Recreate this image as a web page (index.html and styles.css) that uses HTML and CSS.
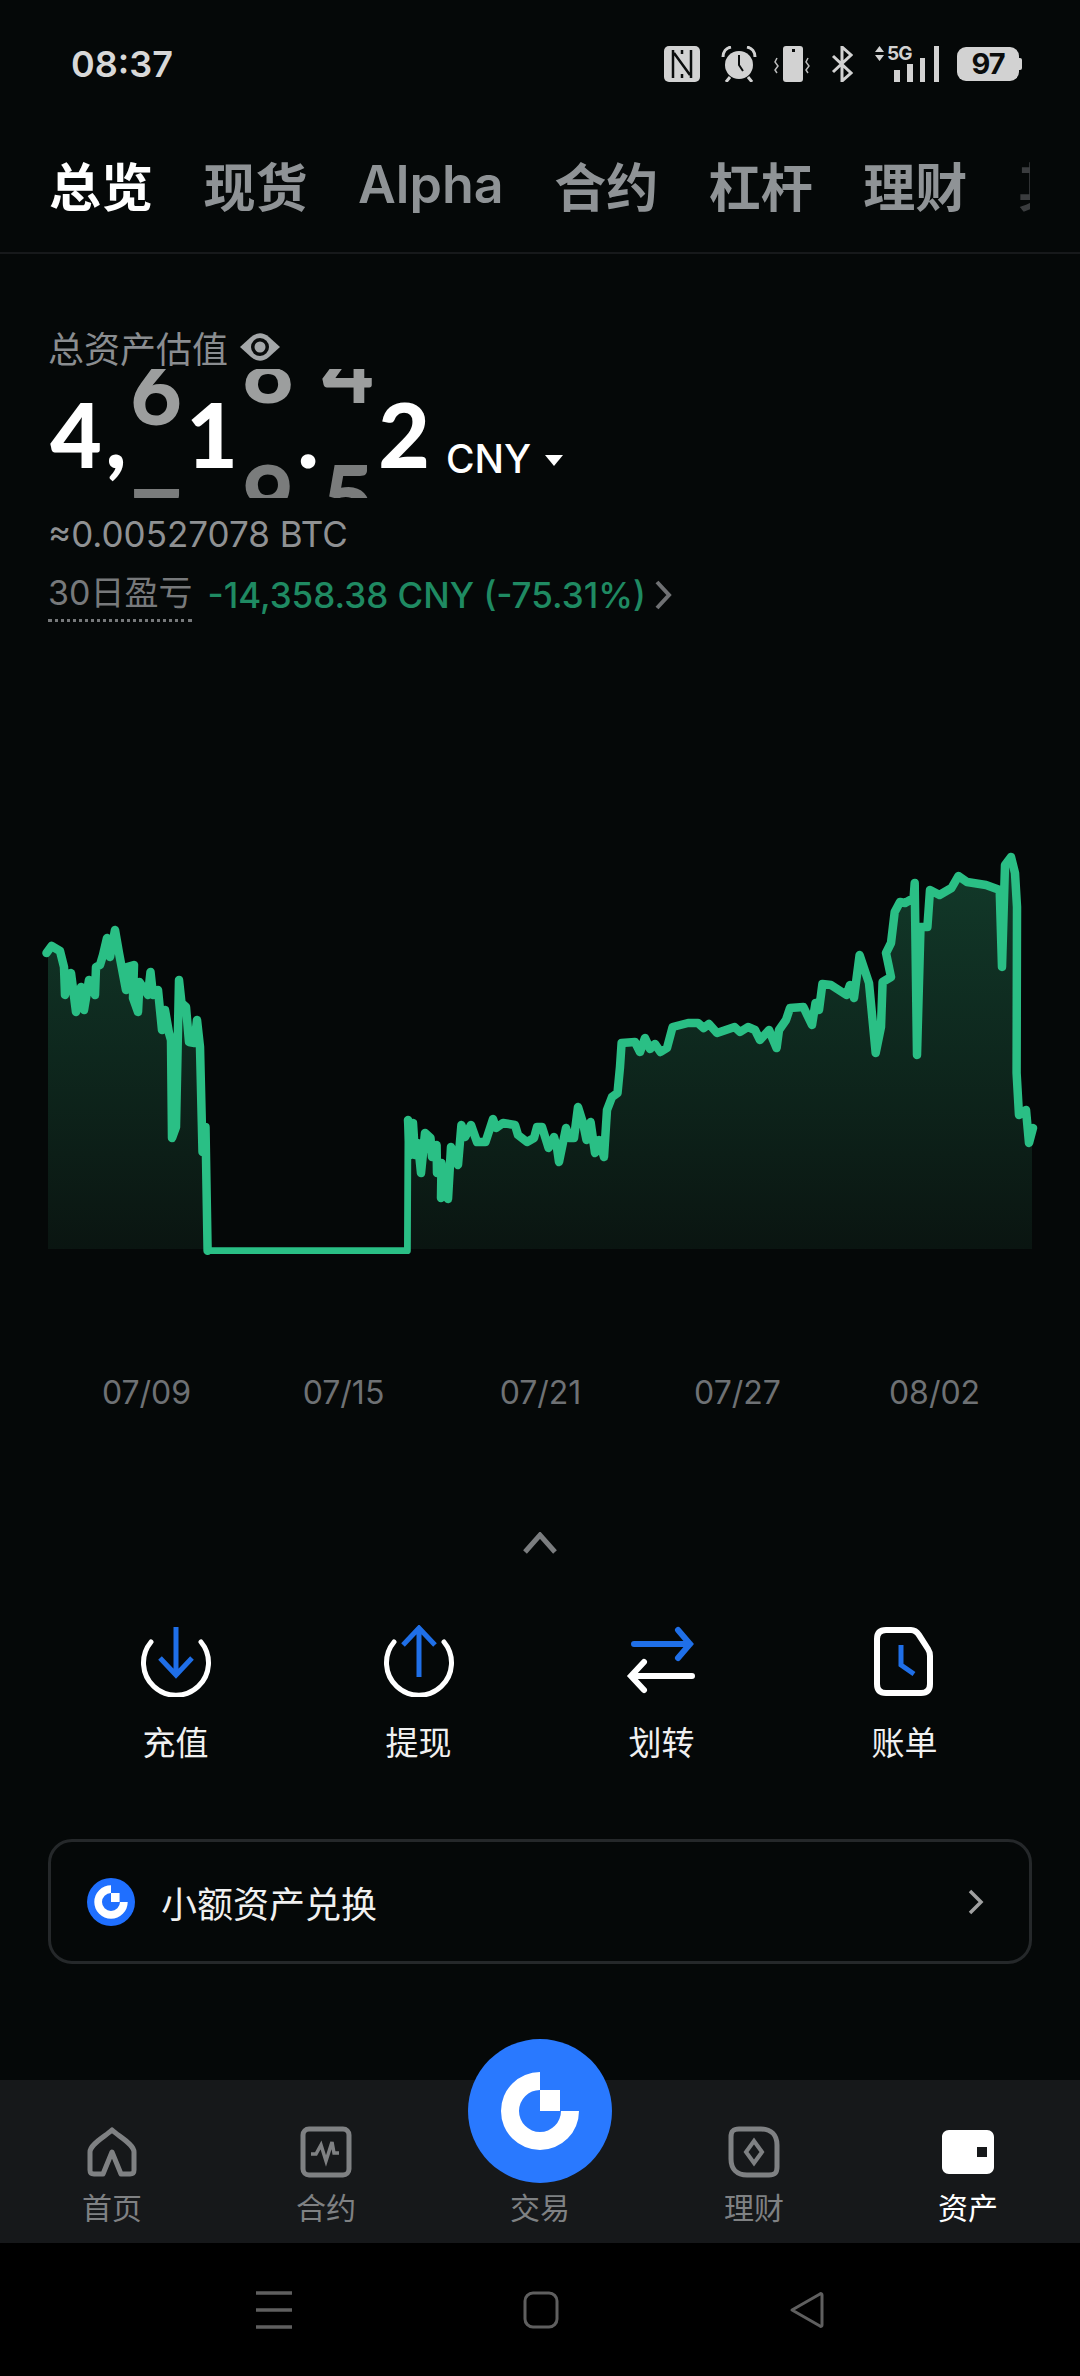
FILE: index.html
```html
<!DOCTYPE html>
<html lang="zh-CN">

    <head>
        <meta charset="UTF-8">
        <meta name="viewport" content="width=device-width, initial-scale=1.0">
        <title>总览</title>
        <link rel="stylesheet" href="styles.css">
    </head>

    <body>
        <div class="status">
            <span class="time">08:37</span>
            <div class="status-icons">
                <svg class="ic-nfc" width="36" height="36" viewBox="0 0 36 36"><rect width="36" height="36" rx="5" fill="#d2d2d2"/><path d="M9 4v28M18 4v4M18 28v4M27 4v28M10 7l16 22" fill="none" stroke="#0a0c0c" stroke-width="2.500"/></svg>
                <svg class="ic-alarm" width="36" height="36" viewBox="0 0 36 36"><circle cx="18" cy="19" r="14" fill="#d2d2d2"/><path d="M18 9v10l4 6" fill="none" stroke="#0a0c0c" stroke-width="2"/><path d="M2 11C2 6 5 2 10 1M34 11c0-5-3-9-8-10M9 31l-4 5M27 31l4 5" fill="none" stroke="#d2d2d2" stroke-width="3"/></svg>
                <svg class="ic-vibrate" width="36" height="36" viewBox="0 0 36 36"><rect x="9" width="20" height="36" rx="3" fill="#d2d2d2"/><rect x="18" y="3" width="3" height="3" fill="#0a0c0c"/><path d="M3 12l-2 4 3 4-3 4 2 3M34 12l-2 4 3 4-3 4 2 3" fill="none" stroke="#bcbcbc" stroke-width="1.500"/></svg>
                <svg class="ic-bt" width="22" height="36" viewBox="0 0 22 36"><path d="M2 10l18 17-9 8V1l9 8L2 26" fill="none" stroke="#d2d2d2" stroke-width="3"/></svg>
                <div class="signal">
                    <svg class="arrows" width="9" height="15" viewBox="0 0 9 15"><path d="M4.500 0 9 6H0zM4.500 15 0 9h9z" fill="#d2d2d2"/></svg>
                    <span class="five-g">5G</span>
                    <svg class="bars" width="46" height="36" viewBox="0 0 46 36"><path d="M0 24h6v12H0zM13 18h6v18h-6zM26 12h5v24h-5zM40 0h5v36h-5z" fill="#d2d2d2"/></svg>
                </div>
                <div class="battery"><span>97</span></div>
            </div>
        </div>

        <nav class="tabs">
            <div class="tab-list">
                <span class="tab active">总览</span>
                <span class="tab">现货</span>
                <span class="tab">Alpha</span>
                <span class="tab">合约</span>
                <span class="tab">杠杆</span>
                <span class="tab">理财</span>
                <span class="tab faded">其他</span>
            </div>
        </nav>

        <section class="summary">
            <div class="label-row">
                <span>总资产估值</span>
                <svg width="40" height="28" viewBox="0 0 40 28"><path d="M0 14 11 4C17-1 23-1 29 4L40 14 29 24C23 29 17 29 11 24z" fill="#a4a7a9"/><circle cx="20" cy="14" r="9" fill="#0a0c0c"/><circle cx="20" cy="14" r="5.500" fill="#a4a7a9"/></svg>
            </div>
            <div class="amount-row">
                <div class="roller">
                    <span class="cell">4</span>
                    <span class="cell punct">,</span>
                    <span class="cell reel reel-a"><b>6</b><i>7</i></span>
                    <span class="cell">1</span>
                    <span class="cell reel reel-b"><b>8</b><i>9</i></span>
                    <span class="cell punct">.</span>
                    <span class="cell reel reel-b"><b>4</b><i>5</i></span>
                    <span class="cell">2</span>
                </div>
                <span class="unit">CNY</span>
                <svg class="caret" width="18" height="11" viewBox="0 0 18 11"><path d="M0 0h18l-9 11z" fill="#fff"/></svg>
            </div>
            <div class="btc">≈0.00527078 BTC</div>
            <div class="pnl">
                <span class="pnl-label">30日盈亏</span>
                <span class="pnl-value">-14,358.38 CNY (-75.31%)</span>
                <svg width="17" height="30" viewBox="0 0 17 30"><path d="M2 2l12 13L2 28" fill="none" stroke="#6f7173" stroke-width="4"/></svg>
            </div>
        </section>

        <svg class="chart" width="1080" height="500" viewBox="0 800 1080 500">
            <defs>
                <linearGradient id="area" x1="0" y1="0" x2="0" y2="1">
                    <stop offset="0" stop-color="#123a2a"/>
                    <stop offset="1" stop-color="#0a1511"/>
                </linearGradient>
            </defs>
            <path fill="url(#area)" d="M48 1249V953L51.600 946 60 951 64 967 65 995 71 973 76 1012 81 987 84 1010 89 980 95 995 96 967 100 965 103 955 107 938 110 957 115 930 119 953 126 990 127 967 134 965 133 998 138 1012 139.500 982 148 995 150.500 972 153 995 158 990 162 1030 165 1010 169 1033 171 1040 172 1138 176 1127 179 980 181.500 1003 186 1007 189 1042 194.500 1043 197 1020 200 1047 202.500 1152 205.500 1127 207.600 1249H407.400L408 1120 410 1155 413 1123 415 1155 418 1143 421 1173 425 1133 430.500 1138 432 1157 436.600 1145 437 1173 441.500 1163 441 1198 444 1187 448 1199 451 1147 458 1165 461.400 1125 465 1137 471 1125 477 1142 485.500 1142 493 1119 496 1128 503 1123 515 1125 518 1135 527 1142 534 1138 537 1127 542 1127 548.600 1148 554 1137 557 1148 559 1162 566 1128 569 1138 574 1138 578 1107 583 1123 586.500 1140 590.600 1122 595 1153 599 1140 604 1157 607 1110 612 1097 617.500 1093 620 1067 621.600 1043 635 1042 640 1052 645 1038 650 1049 655 1044 660.500 1052 667 1048 672.600 1027 688 1023 698 1023 703.600 1028 709 1024 717 1033 734.600 1027 740 1032 748 1027 755 1030 760 1040 769 1030 776.600 1048 779 1030 786 1020 790 1008 803.400 1007 812 1025 815.500 1003 819 1010 822.400 984 831 985 846.500 995 850 985 854 998 859.600 955 869 983 875.700 1053 881 1027 882.600 982 891 977 886 953 891 943 894.700 912 900 902 905 903 913.600 898 914.700 883 917 1055 920.500 927 927.400 927 930 890 939.500 895 951.500 888 958.400 876 967 882 986 885 999.700 890 1002 967 1005 865 1011 857 1015 873 1017 907 1016.600 1073 1019 1115 1026 1110 1029 1143 1032 1128V1249z"/>
            <path fill="none" stroke="#2abf85" stroke-width="8.500" stroke-linejoin="round" stroke-linecap="round" d="M46.500 953 51.600 946 60 951 64 967 65 995 71 973 76 1012 81 987 84 1010 89 980 95 995 96 967 100 965 103 955 107 938 110 957 115 930 119 953 126 990 127 967 134 965 133 998 138 1012 139.500 982 148 995 150.500 972 153 995 158 990 162 1030 165 1010 169 1033 171 1040 172 1138 176 1127 179 980 181.500 1003 186 1007 189 1042 194.500 1043 197 1020 200 1047 202.500 1152 205.500 1127 207.600 1250.700"/>
            <path fill="none" stroke="#2abf85" stroke-width="6.800" stroke-linejoin="round" stroke-linecap="round" d="M207.600 1250.700H407.400L408 1120"/>
            <path fill="none" stroke="#2abf85" stroke-width="8.500" stroke-linejoin="round" stroke-linecap="round" d="M408 1120 410 1155 413 1123 415 1155 418 1143 421 1173 425 1133 430.500 1138 432 1157 436.600 1145 437 1173 441.500 1163 441 1198 444 1187 448 1199 451 1147 458 1165 461.400 1125 465 1137 471 1125 477 1142 485.500 1142 493 1119 496 1128 503 1123 515 1125 518 1135 527 1142 534 1138 537 1127 542 1127 548.600 1148 554 1137 557 1148 559 1162 566 1128 569 1138 574 1138 578 1107 583 1123 586.500 1140 590.600 1122 595 1153 599 1140 604 1157 607 1110 612 1097 617.500 1093 620 1067 621.600 1043 635 1042 640 1052 645 1038 650 1049 655 1044 660.500 1052 667 1048 672.600 1027 688 1023 698 1023 703.600 1028 709 1024 717 1033 734.600 1027 740 1032 748 1027 755 1030 760 1040 769 1030 776.600 1048 779 1030 786 1020 790 1008 803.400 1007 812 1025 815.500 1003 819 1010 822.400 984 831 985 846.500 995 850 985 854 998 859.600 955 869 983 875.700 1053 881 1027 882.600 982 891 977 886 953 891 943 894.700 912 900 902 905 903 913.600 898 914.700 883 917 1055 920.500 927 927.400 927 930 890 939.500 895 951.500 888 958.400 876 967 882 986 885 999.700 890 1002 967 1005 865 1011 857 1015 873 1017 907 1016.600 1073 1019 1115 1026 1110 1029 1143 1033 1128"/>
        </svg>

        <div class="dates">
            <span>07/09</span>
            <span>07/15</span>
            <span>07/21</span>
            <span>07/27</span>
            <span>08/02</span>
        </div>

        <div class="collapse">
            <svg width="34" height="22" viewBox="0 0 34 22"><path d="M2 20 17 3l15 17" fill="none" stroke="#7b7d7f" stroke-width="5"/></svg>
        </div>

        <div class="actions">
            <div class="action">
                <svg width="72" height="72" viewBox="0 0 72 72"><path d="M11 17a32.500 32.500 0 1 0 50 0" fill="none" stroke="#fff" stroke-width="5" stroke-linecap="round"/><path d="M36 2v46M20 33l16 17 16-17" fill="none" stroke="#1f6fe8" stroke-width="5"/></svg>
                <span>充值</span>
            </div>
            <div class="action">
                <svg width="72" height="72" viewBox="0 0 72 72"><path d="M11 17a32.500 32.500 0 1 0 50 0" fill="none" stroke="#fff" stroke-width="5" stroke-linecap="round"/><path d="M36 52V4M20 20 36 3l16 17" fill="none" stroke="#1f6fe8" stroke-width="5"/></svg>
                <span>提现</span>
            </div>
            <div class="action">
                <svg width="72" height="72" viewBox="0 0 72 72"><path d="M8 19h56M52 5l12 14-12 14" fill="none" stroke="#1f6fe8" stroke-width="6" stroke-linecap="round"/><path d="M66 51H8M18 37 5 51l13 14" fill="none" stroke="#fff" stroke-width="6" stroke-linecap="round"/></svg>
                <span>划转</span>
            </div>
            <div class="action">
                <svg width="72" height="72" viewBox="0 0 72 72"><path d="M17 5h25c4 0 6 2 8 5l9 14c2 3 2 4 2 7v28c0 6-3 9-9 9H17c-6 0-9-3-9-9V14c0-6 3-9 9-9z" fill="none" stroke="#fff" stroke-width="6"/><path d="M32 20v20l13 9" fill="none" stroke="#1f6fe8" stroke-width="5"/></svg>
                <span>账单</span>
            </div>
        </div>

        <div class="convert">
            <svg class="convert-logo" width="48" height="48" viewBox="-56 -56 112 112"><circle cx="0" cy="0" r="56" fill="#1f6fff"/><path fill="#fff" fill-rule="evenodd" d="M0-39V-21H20V0H39A39 39 0 1 1 0-39ZM0-21A21 21 0 1 0 21 0H0Z"/></svg>
            <span class="convert-text">小额资产兑换</span>
            <svg width="16" height="26" viewBox="0 0 16 26"><path d="M2 2l11 11L2 24" fill="none" stroke="#a0a0a0" stroke-width="3.500"/></svg>
        </div>

        <div class="tabbar">
            <div class="bar-item">
                <svg width="52" height="52" viewBox="0 0 52 52"><path d="M26 4C20 10 4 18 4 26V44c0 3 1 4 4 4h9l9-22 9 22h9c3 0 4-1 4-4V26C48 18 32 10 26 4z" fill="none" stroke="#7f8183" stroke-width="5" stroke-linejoin="round"/></svg>
                <span>首页</span>
            </div>
            <div class="bar-item">
                <svg width="52" height="52" viewBox="0 0 52 52"><rect x="3" y="3" width="46" height="46" rx="6" fill="none" stroke="#7f8183" stroke-width="5"/><path d="M11 28h5l5-9 5 16 6-19 2 11h5" fill="none" stroke="#7f8183" stroke-width="3.500"/></svg>
                <span>合约</span>
            </div>
            <div class="bar-item">
                <div class="fab">
                    <svg width="84" height="84" viewBox="-42 -42 84 84"><path fill="#fff" fill-rule="evenodd" d="M0-39V-21H20V0H39A39 39 0 1 1 0-39ZM0-21A21 21 0 1 0 21 0H0Z"/></svg>
                </div>
                <span class="fab-label">交易</span>
            </div>
            <div class="bar-item">
                <svg width="52" height="52" viewBox="0 0 52 52"><path d="M11 3h22c10 0 16 6 16 16v22c0 6-2 8-8 8H19C9 49 3 43 3 33V11c0-6 2-8 8-8z" fill="none" stroke="#7f8183" stroke-width="5"/><path d="M26 15l8 11-8 11-8-11z" fill="none" stroke="#7f8183" stroke-width="4"/></svg>
                <span>理财</span>
            </div>
            <div class="bar-item active">
                <svg width="52" height="52" viewBox="0 0 52 52"><path fill="#fff" fill-rule="evenodd" d="M7 4h38c4 0 7 3 7 7v30c0 4-3 7-7 7H7c-4 0-7-3-7-7V11c0-4 3-7 7-7zM35 21v10h10V21z"/></svg>
                <span>资产</span>
            </div>
        </div>

        <div class="navbar">
            <svg width="36" height="38" viewBox="0 0 36 38"><path d="M0 2h36M0 19h36M0 36h36" fill="none" stroke="#5f5f5f" stroke-width="3.500"/></svg>
            <svg width="36" height="38" viewBox="0 0 36 38"><rect x="2" y="2" width="32" height="34" rx="8" fill="none" stroke="#5f5f5f" stroke-width="3"/></svg>
            <svg width="36" height="38" viewBox="0 0 36 38"><path d="M3 19 31 3c1-1 2 0 2 1v30c0 1-1 2-2 1z" fill="none" stroke="#5f5f5f" stroke-width="3" stroke-linejoin="round"/></svg>
        </div>
    </body>

</html>
```

FILE: styles.css
```css
* {
    box-sizing: border-box;
}

body {
    margin: 0;
    width: 1080px;
    height: 2376px;
    overflow: hidden;
    display: flex;
    flex-direction: column;
    background-color: #050808;
    color: #fff;
    font-family: Inter, "Noto Sans CJK SC", sans-serif;
}

svg {
    display: block;
    flex-shrink: 0;
}

/* status bar */
.status {
    height: 128px;
    padding: 0 58px 0 71px;
    display: flex;
    align-items: center;
    justify-content: space-between;
}

.time {
    font-size: 36px;
    font-weight: 600;
    color: #d8d8d8;
}

.status-icons {
    display: flex;
    align-items: center;
}

.ic-nfc {
    margin-right: 21px;
}

.ic-alarm {
    margin-right: 17px;
}

.ic-vibrate {
    margin-right: 21px;
}

.ic-bt {
    margin-right: 22px;
}

.signal {
    position: relative;
    width: 65px;
    height: 36px;
    margin-right: 17px;
}

.arrows {
    position: absolute;
    left: 0;
    top: 0;
}

.five-g {
    position: absolute;
    left: 12px;
    top: -1px;
    font-size: 19px;
    line-height: 18px;
    font-weight: 700;
    letter-spacing: -1px;
    color: #d2d2d2;
}

.bars {
    position: absolute;
    right: 0;
    top: 0;
}

.battery {
    position: relative;
    width: 62px;
    height: 34px;
    margin-right: 3px;
    border-radius: 9px;
    background-color: #d2d2d2;
    color: #0a0c0c;
    font-size: 29px;
    font-weight: 700;
    line-height: 34px;
    letter-spacing: -1px;
    text-align: center;
}

.battery::after {
    content: "";
    position: absolute;
    right: -3px;
    top: 11px;
    width: 3px;
    height: 12px;
    border-radius: 0 2px 2px 0;
    background-color: #d2d2d2;
}

/* top tabs */
.tabs {
    height: 126px;
    padding: 0 0 12px 49px;
    display: flex;
    align-items: center;
    border-bottom: 2px solid #17191b;
}

.tab-list {
    width: 981px;
    display: flex;
    align-items: center;
    gap: 50.5px;
    overflow: hidden;
}

.tab {
    flex-shrink: 0;
    font-size: 52px;
    font-weight: 600;
    color: #8f9396;
}

.tab.active {
    color: #fff;
    font-weight: 700;
}

.tab.faded {
    color: #3a3c3e;
}

/* balance */
.summary {
    height: 546px;
    padding: 70px 48px 0;
}

.label-row {
    height: 45px;
    display: flex;
    align-items: center;
    gap: 12px;
    font-size: 36px;
    color: #8a8d90;
}

.amount-row {
    display: flex;
    align-items: flex-start;
}

.roller {
    height: 129px;
    display: flex;
    overflow: hidden;
    font-family: Lato, sans-serif;
    font-size: 89px;
    font-weight: 900;
    line-height: 129px;
}

.cell {
    width: 56px;
    text-align: center;
}

.cell.punct {
    width: 24px;
}

.reel {
    display: flex;
    flex-direction: column;
}

.reel b,
.reel i {
    font-style: normal;
    font-weight: 900;
}

.reel b {
    color: #9c9e9e;
}

.reel i {
    color: #7a7c7c;
}

.reel-a {
    margin-top: -43px;
}

.reel-a b,
.reel-a i {
    height: 130px;
}

.reel-b {
    margin-top: -65px;
}

.reel-b b,
.reel-b i {
    height: 127px;
}

.unit {
    margin: 66px 0 0 14px;
    font-size: 39px;
    line-height: 48px;
    font-weight: 500;
    color: #fff;
}

.caret {
    margin: 86px 0 0 14px;
}

.btc {
    margin-top: 11px;
    font-size: 35px;
    line-height: 50px;
    color: #8f9193;
}

.pnl {
    margin-top: 9px;
    display: flex;
    align-items: center;
    font-size: 35px;
    line-height: 50px;
}

.pnl-label {
    color: #77797b;
    font-size: 34px;
    margin-right: 15px;
    padding-bottom: 1px;
    border-bottom: 3px dotted #77797b;
}

.pnl-value {
    color: #1f8a62;
    font-weight: 500;
    margin-right: 9px;
}

/* chart */
.chart {
    height: 500px;
}

.dates {
    height: 88px;
    padding: 0 48px 0;
    margin-top: 49px;
    display: grid;
    grid-template-columns: repeat(5, 197px);
    font-size: 32px;
    line-height: 88px;
    color: #6e7174;
    text-align: center;
}

.collapse {
    margin-top: 95px;
    display: flex;
    justify-content: center;
}

.actions {
    margin-top: 71px;
    padding-left: 54px;
    display: grid;
    grid-template-columns: repeat(4, 243px);
}

.action {
    display: flex;
    flex-direction: column;
    align-items: center;
    gap: 24px;
    font-size: 33px;
    line-height: 44px;
    color: #f0f0f0;
}

.convert {
    margin: 74px 48px 0;
    height: 125px;
    padding: 0 45px 0 36px;
    display: flex;
    align-items: center;
    border: 3px solid #25282a;
    border-radius: 24px;
}

.convert-logo {
    margin-right: 26px;
}

.convert-text {
    flex: 1;
    font-size: 36px;
    color: #f0f0f0;
}

/* bottom tabs */
.tabbar {
    margin-top: auto;
    height: 163px;
    padding: 46px 5px 0;
    display: grid;
    grid-template-columns: repeat(5, 214px);
    background-color: #16181a;
}

.bar-item {
    position: relative;
    display: flex;
    flex-direction: column;
    align-items: center;
    gap: 10px;
    font-size: 30px;
    line-height: 40px;
    color: #7f8183;
}

.bar-item.active {
    color: #fff;
}

.fab {
    position: absolute;
    top: -87px;
    left: 35px;
    width: 144px;
    height: 144px;
    border-radius: 50%;
    background-color: #2979ff;
    display: flex;
    align-items: center;
    justify-content: center;
}

.fab-label {
    margin-top: 62px;
}

.navbar {
    height: 133px;
    padding: 0 255px 0 256px;
    display: flex;
    align-items: center;
    justify-content: space-between;
    background-color: #000;
}
```
